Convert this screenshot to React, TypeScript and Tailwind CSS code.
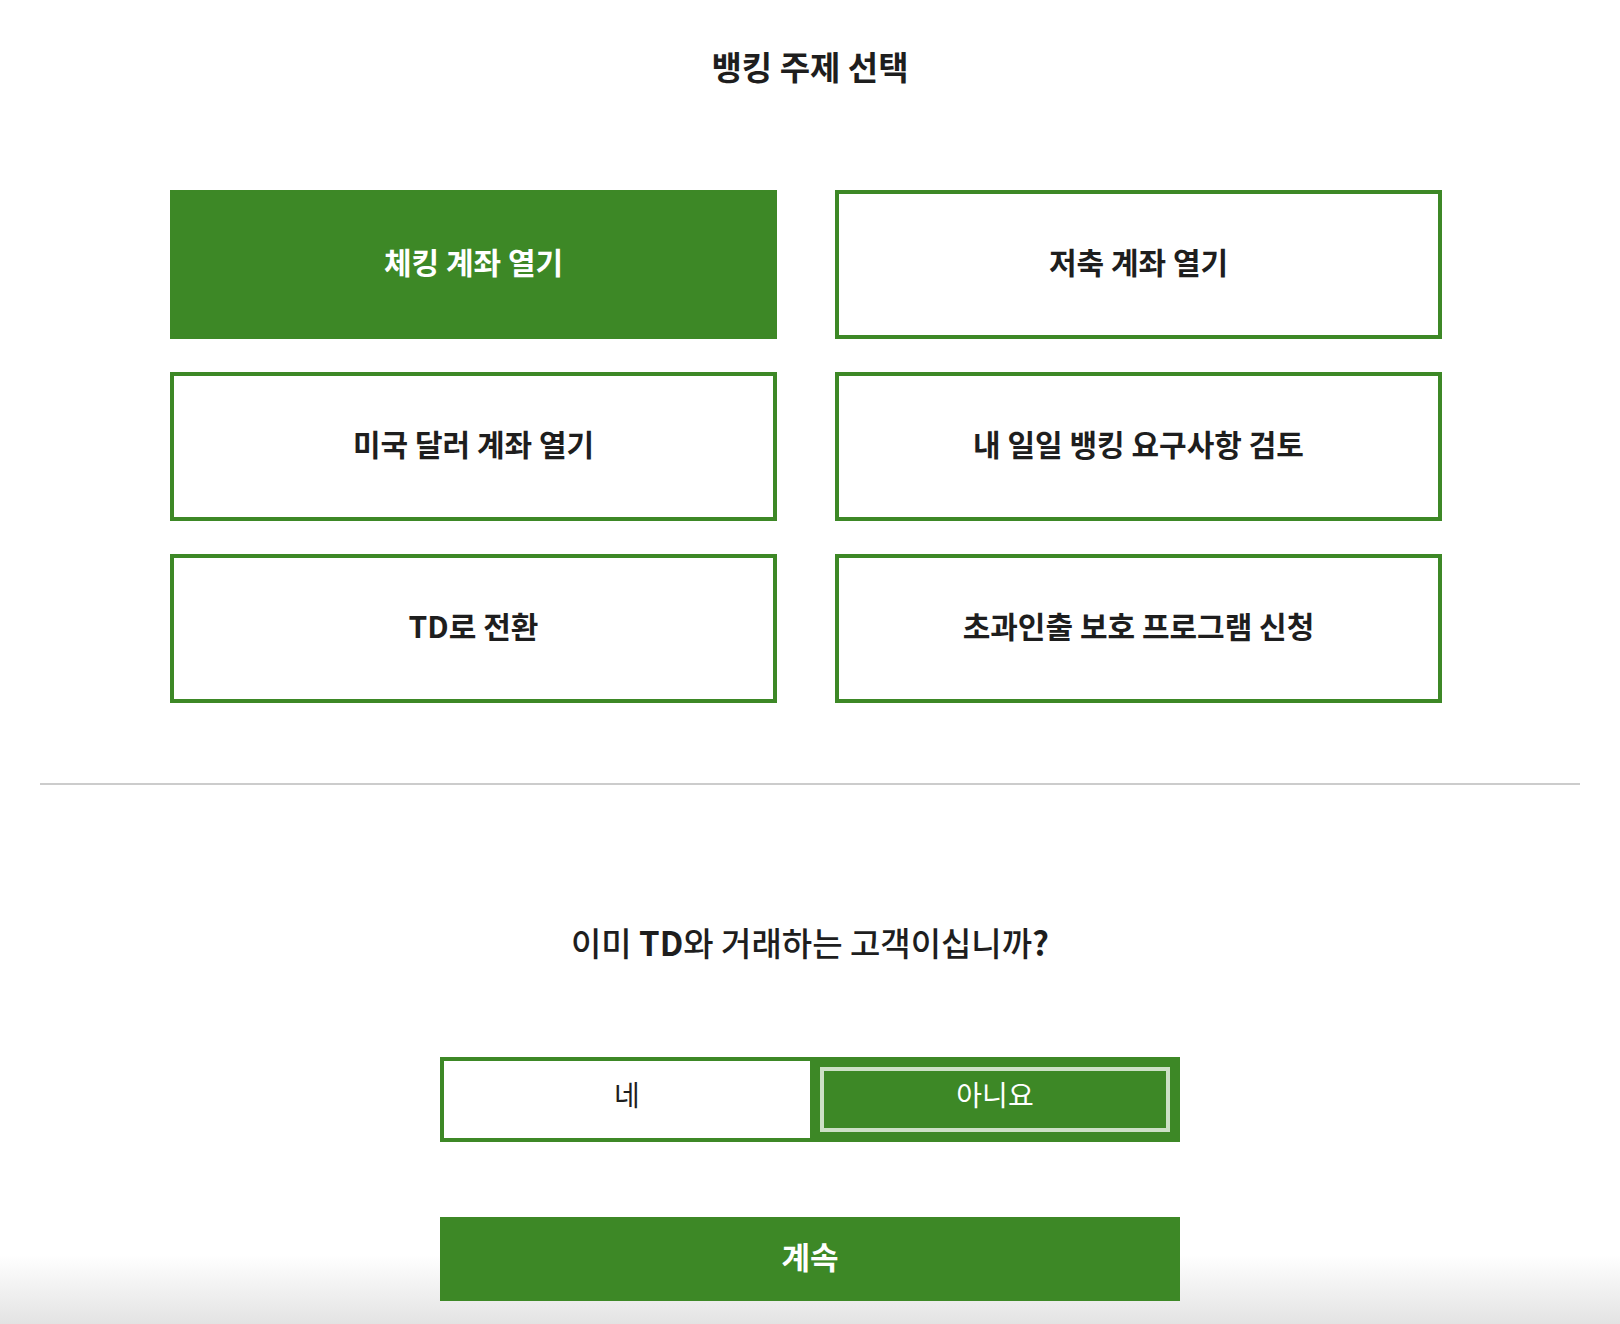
import { useState } from "react";

const topics = [
  "체킹 계좌 열기",
  "저축 계좌 열기",
  "미국 달러 계좌 열기",
  "내 일일 뱅킹 요구사항 검토",
  "TD로 전환",
  "초과인출 보호 프로그램 신청",
];

function TopicButton({
  label,
  selected,
  onClick,
}: {
  label: string;
  selected: boolean;
  onClick: () => void;
}) {
  return (
    <button
      onClick={onClick}
      className={
        selected
          ? "flex h-[149px] items-center justify-center border-4 border-[#3d8826] bg-[#3d8826] pb-[7px] text-[30px] font-semibold text-white"
          : "flex h-[149px] items-center justify-center border-4 border-[#3d8826] bg-white pb-[7px] text-[30px] font-semibold text-[#1e1e1e]"
      }
    >
      {label}
    </button>
  );
}

export default function App() {
  const [topic, setTopic] = useState(0);
  const [existing, setExisting] = useState(false);

  return (
    <div
      className="flex min-h-[1324px] flex-col bg-[linear-gradient(180deg,#ffffff_1255px,#e3e3e3_1324px)] text-[#1e1e1e]"
      style={{ fontFamily: '"Noto Sans CJK KR", "Noto Sans", sans-serif' }}
    >
      <h1 className="pt-[46px] text-center text-[33px] leading-[40px] font-semibold">
        뱅킹 주제 선택
      </h1>

      <div className="mt-[104px] ml-[170px] grid w-[1272px] grid-cols-2 gap-x-[58px] gap-y-[33px]">
        {topics.map((t, i) => (
          <TopicButton
            key={t}
            label={t}
            selected={topic === i}
            onClick={() => setTopic(i)}
          />
        ))}
      </div>

      <hr className="mx-[40px] mt-[80px] border-0 border-t-2 border-[#cccccc]" />

      <p className="mt-[137px] text-center text-[33px] leading-[40px] font-medium">
        이미 <span className="font-bold">TD</span>와 거래하는 고객이십니까
        <span className="font-bold">?</span>
      </p>

      <div className="mx-auto mt-[95px] flex h-[85px] w-[740px] border-4 border-[#3d8826]">
        <button
          onClick={() => setExisting(true)}
          className={
            existing
              ? "flex w-[366px] items-center justify-center bg-[#3d8826] pb-[11px] text-[28px] text-white"
              : "flex w-[366px] items-center justify-center bg-white pb-[11px] text-[28px] text-[#1e1e1e]"
          }
        >
          네
        </button>
        <div className="flex w-[366px] bg-[#3d8826] py-[6px] pr-[6px] pl-[10px]">
          <button
            onClick={() => setExisting(false)}
            className={
              existing
                ? "flex flex-1 items-center justify-center bg-white pb-[11px] text-[28px] text-[#1e1e1e]"
                : "flex flex-1 items-center justify-center border-4 border-[#cde0c6] pb-[11px] text-[28px] text-white"
            }
          >
            아니요
          </button>
        </div>
      </div>

      <button className="mx-auto mt-[75px] flex h-[84px] w-[740px] items-center justify-center bg-[#3d8826] pb-[5px] text-[31px] font-semibold text-white">
        계속
      </button>
    </div>
  );
}
